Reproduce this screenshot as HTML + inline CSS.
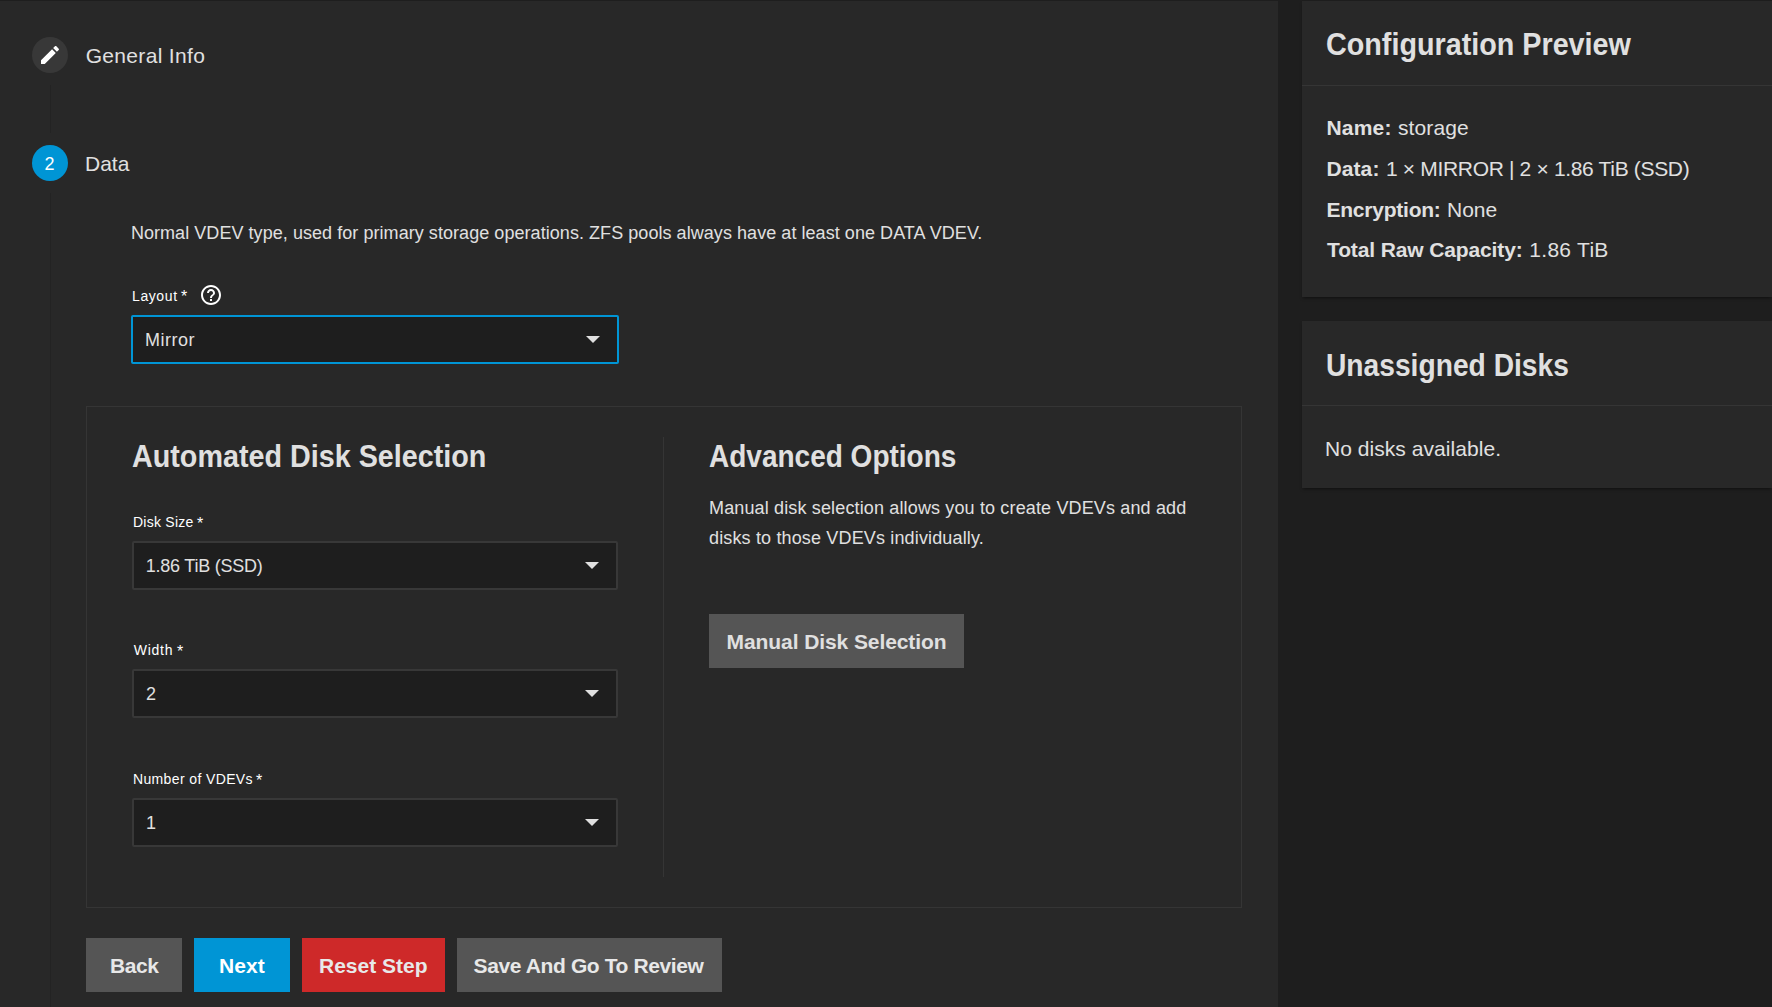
<!DOCTYPE html>
<html><head><meta charset="utf-8"><style>
*{margin:0;padding:0;box-sizing:content-box}
html,body{width:1772px;height:1007px;overflow:hidden;background:#1e1e1e;font-family:"Liberation Sans", sans-serif}
.t{position:absolute;white-space:nowrap}
.left{position:absolute;left:0;top:0;width:1278px;height:1007px;background:#282828}
.gutter{position:absolute;left:1278px;top:0;width:24px;height:1007px;background:#1e1e1e}
.topline{position:absolute;left:0;top:0;width:1772px;height:1px;background:#1e1e1e}
.vl{position:absolute;left:50px;width:1px;background:#232323}
.circ{position:absolute;left:32px;width:36px;height:36px;border-radius:50%}
.sel{position:absolute;border:2px solid #383838;border-radius:2px;background:#1e1e1e}
.arrow{position:absolute;width:0;height:0;border-left:7px solid transparent;border-right:7px solid transparent;border-top:7px solid #e0e0e0}
.box{position:absolute;left:86px;top:406px;width:1154px;height:500px;border:1px solid #353535}
.vdiv{position:absolute;left:663px;top:437px;width:1px;height:440px;background:#353535}
.btn{position:absolute;height:54px}
.card{position:absolute;left:1302px;width:470px;background:#282828;box-shadow:0 2px 3px -1px rgba(0,0,0,.5)}
.hdiv{position:absolute;left:1302px;width:470px;height:1px;background:#353535}
</style></head>
<body>
<div class="left"></div>
<div class="gutter"></div>
<div class="topline"></div>
<div class="vl" style="top:85px;height:48px"></div>
<div class="vl" style="top:193px;height:814px"></div>
<div class="circ" style="top:37px;background:#383838"><svg width="24" height="24" viewBox="0 0 24 24" style="position:absolute;left:6px;top:6px"><path fill="#fff" d="M3 17.25V21h3.75L17.81 9.94l-3.75-3.75L3 17.25zM20.71 7.04c.39-.39.39-1.02 0-1.41l-2.34-2.34c-.39-.39-1.02-.39-1.41 0l-1.83 1.83 3.75 3.75 1.83-1.83z"/></svg></div>
<div class="t" style="left:85.70px;top:41.00px;font-size:21px;line-height:29px;font-weight:400;color:#e0e0e0;letter-spacing:0.327px;">General Info</div>
<div class="circ" style="top:145px;background:#0095d5"><div style="position:absolute;left:-0.5px;top:1px;width:36px;height:36px;line-height:36px;text-align:center;font-size:18px;color:#fff">2</div></div>
<div class="t" style="left:85.00px;top:149.00px;font-size:21px;line-height:29px;font-weight:400;color:#e0e0e0;letter-spacing:0.0px;">Data</div>
<div class="t" style="left:130.90px;top:220.00px;font-size:18px;line-height:26px;font-weight:400;color:#e0e0e0;letter-spacing:0.054px;">Normal VDEV type, used for primary storage operations. ZFS pools always have at least one DATA VDEV.</div>
<div class="t" style="left:132.00px;top:285.00px;font-size:14px;line-height:22px;font-weight:400;color:#fff;letter-spacing:0.6px;">Layout</div>
<div class="t" style="left:181px;top:285px;font-size:16px;line-height:24px;color:#fff">*</div>
<svg width="24" height="24" viewBox="0 0 24 24" style="position:absolute;left:199px;top:283px"><path fill="#fff" d="M11 18h2v-2h-2v2zm1-16C6.48 2 2 6.48 2 12s4.48 10 10 10 10-4.48 10-10S17.52 2 12 2zm0 18c-4.41 0-8-3.59-8-8s3.59-8 8-8 8 3.59 8 8-3.59 8-8 8zm0-14c-2.21 0-4 1.79-4 4h2c0-1.1.9-2 2-2s2 .9 2 2c0 2-3 1.75-3 5h2c0-2.25 3-2.5 3-5 0-2.21-1.79-4-4-4z"/></svg>
<div class="sel" style="left:131px;top:315px;width:484px;height:45px;border-color:#0095d5"></div><div class="t" style="left:145.00px;top:327.00px;font-size:18px;line-height:26px;font-weight:400;color:#e0e0e0;letter-spacing:0.48px;">Mirror</div><div class="arrow" style="left:586px;top:336px"></div>
<div class="box"></div>
<div class="vdiv"></div>
<div class="t" style="left:131.67px;top:437.00px;font-size:31px;line-height:39px;font-weight:700;color:#e0e0e0;letter-spacing:0px;transform:scaleX(0.9266);transform-origin:0 0;">Automated Disk Selection</div>
<div class="t" style="left:133.00px;top:511.00px;font-size:14px;line-height:22px;font-weight:400;color:#fff;letter-spacing:0.25px;">Disk Size</div>
<div class="t" style="left:197px;top:512px;font-size:16px;line-height:24px;color:#fff">*</div>
<div class="sel" style="left:132px;top:541px;width:482px;height:45px;border-color:#383838"></div><div class="t" style="left:145.70px;top:553.00px;font-size:18px;line-height:26px;font-weight:400;color:#e0e0e0;letter-spacing:-0.223px;">1.86 TiB (SSD)</div><div class="arrow" style="left:585px;top:562px"></div>
<div class="t" style="left:133.70px;top:639.00px;font-size:14px;line-height:22px;font-weight:400;color:#fff;letter-spacing:0.775px;">Width</div>
<div class="t" style="left:177px;top:640px;font-size:16px;line-height:24px;color:#fff">*</div>
<div class="sel" style="left:132px;top:669px;width:482px;height:45px;border-color:#383838"></div><div class="arrow" style="left:585px;top:690px"></div>
<div class="t" style="left:146.00px;top:681.00px;font-size:18px;line-height:26px;font-weight:400;color:#e0e0e0;letter-spacing:0px;">2</div>
<div class="t" style="left:132.90px;top:768.00px;font-size:14px;line-height:22px;font-weight:400;color:#fff;letter-spacing:0.379px;">Number of VDEVs</div>
<div class="t" style="left:256px;top:769px;font-size:16px;line-height:24px;color:#fff">*</div>
<div class="sel" style="left:132px;top:798px;width:482px;height:45px;border-color:#383838"></div><div class="arrow" style="left:585px;top:819px"></div>
<div class="t" style="left:146.00px;top:810.00px;font-size:18px;line-height:26px;font-weight:400;color:#e0e0e0;letter-spacing:0px;">1</div>
<div class="t" style="left:709.40px;top:437.00px;font-size:31px;line-height:39px;font-weight:700;color:#e0e0e0;letter-spacing:0px;transform:scaleX(0.9033);transform-origin:0 0;">Advanced Options</div>
<div class="t" style="left:709.00px;top:495.00px;font-size:18px;line-height:26px;font-weight:400;color:#e0e0e0;letter-spacing:0.145px;">Manual disk selection allows you to create VDEVs and add</div>
<div class="t" style="left:709.00px;top:525.00px;font-size:18px;line-height:26px;font-weight:400;color:#e0e0e0;letter-spacing:0.152px;">disks to those VDEVs individually.</div>
<div class="btn" style="left:709px;top:614px;width:255px;background:#555"></div>
<div class="t" style="left:726.60px;top:627.00px;font-size:21px;line-height:29px;font-weight:700;color:#e0e0e0;letter-spacing:-0.09px;">Manual Disk Selection</div>
<div class="btn" style="left:86px;top:938px;width:96px;background:#555"></div>
<div class="t" style="left:110.00px;top:951.00px;font-size:21px;line-height:29px;font-weight:700;color:#e8e8e8;letter-spacing:-0.4px;">Back</div>
<div class="btn" style="left:194px;top:938px;width:96px;background:#0095d5"></div>
<div class="t" style="left:219.00px;top:951.00px;font-size:21px;line-height:29px;font-weight:700;color:#fff;letter-spacing:0.1px;">Next</div>
<div class="btn" style="left:302px;top:938px;width:143px;background:#ce2929"></div>
<div class="t" style="left:319.00px;top:951.00px;font-size:21px;line-height:29px;font-weight:700;color:#e8e8e8;letter-spacing:0.0px;">Reset Step</div>
<div class="btn" style="left:457px;top:938px;width:265px;background:#555"></div>
<div class="t" style="left:473.60px;top:951.00px;font-size:21px;line-height:29px;font-weight:700;color:#e8e8e8;letter-spacing:-0.385px;">Save And Go To Review</div>
<div class="card" style="top:1px;height:296px"></div>
<div class="hdiv" style="top:85px"></div>
<div class="t" style="left:1326.07px;top:25.00px;font-size:31px;line-height:39px;font-weight:700;color:#e0e0e0;letter-spacing:0px;transform:scaleX(0.9268);transform-origin:0 0;">Configuration Preview</div>
<div class="t" style="left:1326.40px;top:113.00px;font-size:21px;line-height:29px;font-weight:700;color:#e0e0e0;letter-spacing:0.2px;">Name:</div>
<div class="t" style="left:1398.00px;top:113.00px;font-size:21px;line-height:29px;font-weight:400;color:#e0e0e0;letter-spacing:0.117px;">storage</div>
<div class="t" style="left:1326.40px;top:154.00px;font-size:21px;line-height:29px;font-weight:700;color:#e0e0e0;letter-spacing:0.125px;">Data:</div>
<div class="t" style="left:1386.00px;top:154.00px;font-size:21px;line-height:29px;font-weight:400;color:#e0e0e0;letter-spacing:-0.33px;">1 × MIRROR | 2 × 1.86 TiB (SSD)</div>
<div class="t" style="left:1326.40px;top:195.00px;font-size:21px;line-height:29px;font-weight:700;color:#e0e0e0;letter-spacing:-0.22px;">Encryption:</div>
<div class="t" style="left:1447.00px;top:195.00px;font-size:21px;line-height:29px;font-weight:400;color:#e0e0e0;letter-spacing:-0.033px;">None</div>
<div class="t" style="left:1327.00px;top:235.00px;font-size:21px;line-height:29px;font-weight:700;color:#e0e0e0;letter-spacing:-0.128px;">Total Raw Capacity:</div>
<div class="t" style="left:1529.30px;top:235.00px;font-size:21px;line-height:29px;font-weight:400;color:#e0e0e0;letter-spacing:0.286px;">1.86 TiB</div>
<div class="card" style="top:321px;height:167px"></div>
<div class="hdiv" style="top:405px"></div>
<div class="t" style="left:1325.78px;top:346.00px;font-size:31px;line-height:39px;font-weight:700;color:#e0e0e0;letter-spacing:0px;transform:scaleX(0.9095);transform-origin:0 0;">Unassigned Disks</div>
<div class="t" style="left:1325.00px;top:434.00px;font-size:21px;line-height:29px;font-weight:400;color:#e0e0e0;letter-spacing:0.05px;">No disks available.</div>
</body></html>
